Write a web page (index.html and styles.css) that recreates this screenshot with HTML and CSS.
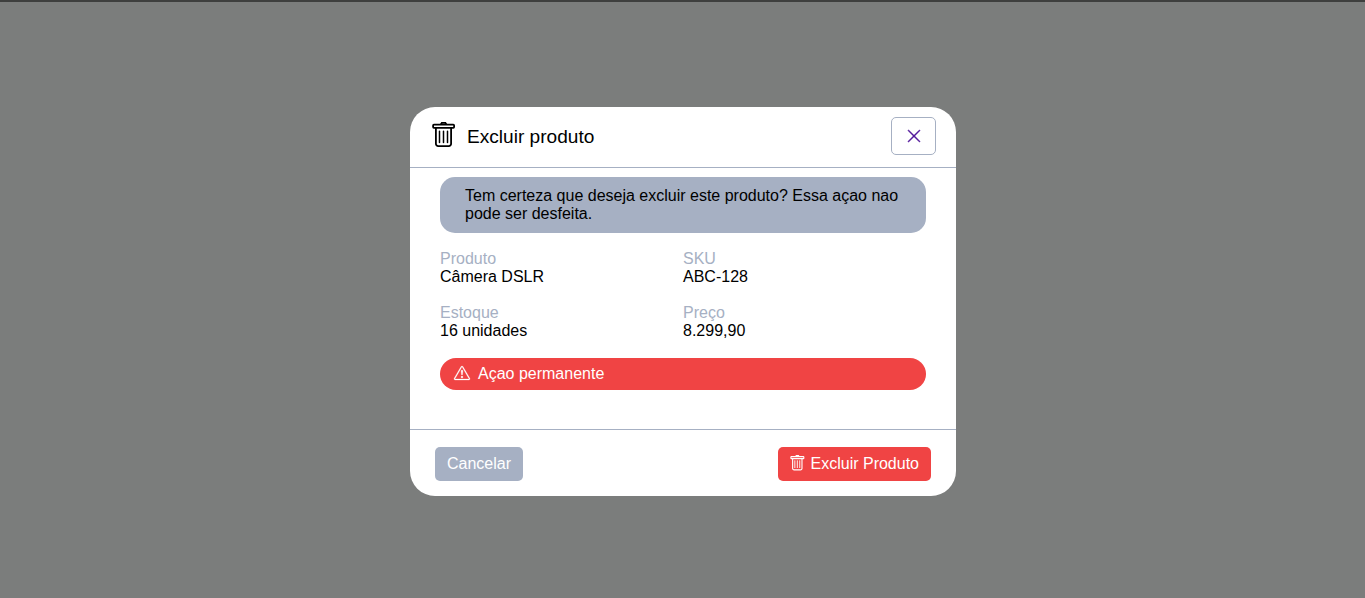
FILE: index.html
```html
<!DOCTYPE html>
<html lang="pt-BR">
<head>
<meta charset="utf-8">
<title>Excluir produto</title>
<link rel="stylesheet" href="styles.css">
</head>
<body>
<svg class="sprite" aria-hidden="true">
  <symbol id="trash" viewBox="0 0 26 26">
    <g fill="none" stroke="currentColor" stroke-width="1.8">
      <rect x="3.100" y="2.700" width="21" height="3.200" rx=".8"/>
      <path d="M10.800 2.500 11.800.9h3.600l1 1.600M5.900 6v15.800a2.300 2.300 0 0 0 2.300 2.300h10.600a2.300 2.300 0 0 0 2.300-2.300V6"/>
      <path stroke-width="1.500" stroke-linecap="round" d="M9.500 9.300v11.200M13.500 9.300v11.200M17.500 9.300v11.200"/>
    </g>
  </symbol>
</svg>
<main class="modal">
  <header class="modal-header">
    <svg class="icon-title"><use href="#trash"/></svg>
    <h1 class="title">Excluir produto</h1>
    <button class="close" aria-label="Fechar">
      <svg class="icon" viewBox="0 0 16 16"><path d="M2.146 2.854a.5.5 0 1 1 .708-.708L8 7.293l5.146-5.147a.5.5 0 0 1 .708.708L8.707 8l5.147 5.146a.5.5 0 0 1-.708.708L8 8.707l-5.146 5.147a.5.5 0 0 1-.708-.708L7.293 8z"/></svg>
    </button>
  </header>
  <section class="modal-body">
    <p class="message">Tem certeza que deseja excluir este produto? Essa açao nao pode ser desfeita.</p>
    <dl class="details">
      <div><dt>Produto</dt><dd>Câmera DSLR</dd></div>
      <div><dt>SKU</dt><dd>ABC-128</dd></div>
      <div><dt>Estoque</dt><dd>16 unidades</dd></div>
      <div><dt>Preço</dt><dd>8.299,90</dd></div>
    </dl>
    <div class="warning">
      <svg class="icon" viewBox="0 0 16 16"><path d="M7.938 2.016A.13.13 0 0 1 8.002 2a.13.13 0 0 1 .063.016.15.15 0 0 1 .054.057l6.857 11.667c.036.06.035.124.002.183a.2.2 0 0 1-.054.06.1.1 0 0 1-.066.017H1.146a.1.1 0 0 1-.066-.017.2.2 0 0 1-.054-.06.18.18 0 0 1 .002-.183L7.884 2.073a.15.15 0 0 1 .054-.057m1.044-.45a1.130 1.130 0 0 0-1.960 0L.165 13.233c-.457.778.091 1.767.980 1.767h13.713c.889 0 1.438-.990.980-1.767z"/><path d="M7.002 12a1 1 0 1 1 2 0 1 1 0 0 1-2 0M7.100 5.995a.905.905 0 1 1 1.800 0l-.350 3.507a.552.552 0 0 1-1.100 0z"/></svg>
      <span>Açao permanente</span>
    </div>
  </section>
  <footer class="modal-footer">
    <button class="btn cancel">Cancelar</button>
    <button class="btn delete"><svg class="icon trash-small"><use href="#trash"/></svg>Excluir Produto</button>
  </footer>
</main>
</body>
</html>
```
FILE: styles.css
```css
* { box-sizing: border-box; margin: 0; padding: 0; }
body {
  height: 598px;
  padding-top: 105px;
  overflow: hidden;
  border-top: 2px solid #3e3f3e;
  background: #7b7d7c;
  font: 16px/18px "Liberation Sans", Arial, sans-serif;
  color: #000;
}
.sprite { display: none; }
svg { fill: currentColor; flex: none; overflow: visible; }
.icon { width: 16px; height: 16px; margin-bottom: 2px; stroke: currentColor; stroke-width: .25px; }
.modal {
  display: flex;
  flex-direction: column;
  width: 546px;
  height: 389px;
  margin-left: 410px;
  border-radius: 25px;
  background: #fff;
}
.modal-header {
  display: flex;
  align-items: center;
  height: 61px;
  padding: 0 20px;
  border-bottom: 1px solid #a6b0c3;
}
.icon-title { width: 26px; height: 26px; margin-top: -4px; }
.title { margin: -1px auto 0 11px; font-size: 19.1px; font-weight: 400; line-height: 22px; }
.close {
  display: flex;
  align-items: center;
  justify-content: center;
  width: 45px;
  height: 38px;
  margin-top: -3px;
  border: 1px solid #a6b0c3;
  border-radius: 5px;
  background: #fff;
  color: #4b0f97;
}
.close .icon { margin-bottom: 0; stroke-width: .5px; }
.modal-body { flex: 1; padding: 9px 30px 0; }
.message {
  height: 56px;
  padding: 10px 25px;
  border-radius: 15px;
  background: #a6b0c3;
}
.details {
  display: grid;
  grid-template-columns: 1fr 1fr;
  row-gap: 18px;
  margin: 17px 0 18px;
}
.details dt { color: #a6b0c3; }
.warning {
  display: flex;
  align-items: center;
  gap: 8px;
  height: 32px;
  padding: 0 14px;
  border-radius: 16px;
  background: #f04444;
  color: #fff;
}
.modal-footer {
  display: flex;
  align-items: flex-start;
  justify-content: space-between;
  height: 67px;
  padding: 17px 25px 0;
  border-top: 1px solid #a6b0c3;
}
.btn {
  display: flex;
  align-items: center;
  gap: 5px;
  height: 34px;
  padding: 0 12px;
  border: 0;
  border-radius: 5px;
  color: #fff;
  font: inherit;
}
.cancel { background: #a6b0c3; }
.delete { background: #f04444; }
.trash-small { margin-left: -1px; margin-right: 1px; }
```
